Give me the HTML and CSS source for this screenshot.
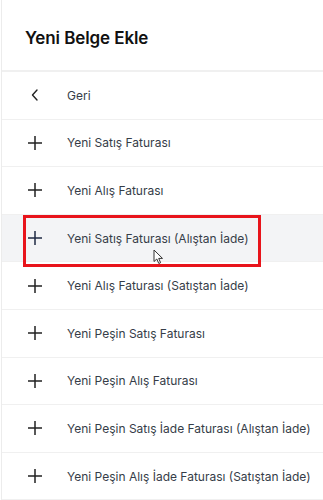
FILE: index.html
```html
<!DOCTYPE html>
<html lang="tr">
<head>
<meta charset="utf-8">
<link rel="stylesheet" href="styles.css">
</head>
<body>
<div class="panel">
  <div class="header">Yeni Belge Ekle</div>
  <ul class="menu">
    <li class="item"><span class="icon"><svg width="16" height="16" viewBox="0 0 16 16"><path d="M10 3 L5.5 8 L10 13" fill="none" stroke="#222" stroke-width="1.4" stroke-linecap="round" stroke-linejoin="round"/></svg></span><span class="label">Geri</span></li>
    <li class="item"><span class="icon"><svg width="16" height="16" viewBox="0 0 16 16"><path d="M8 1 V15 M1 8 H15" stroke="#222" stroke-width="1.5"/></svg></span><span class="label">Yeni Satış Faturası</span></li>
    <li class="item"><span class="icon"><svg width="16" height="16" viewBox="0 0 16 16"><path d="M8 1 V15 M1 8 H15" stroke="#222" stroke-width="1.5"/></svg></span><span class="label">Yeni Alış Faturası</span></li>
    <li class="item active"><span class="icon"><svg width="16" height="16" viewBox="0 0 16 16"><path d="M8 1 V15 M1 8 H15" stroke="#1f2a44" stroke-width="1.5"/></svg></span><span class="label">Yeni Satış Faturası (Alıştan İade)</span>
      <span class="highlight"></span>
      <span class="cursor"><svg width="12" height="16" viewBox="0 0 12 16"><path d="M1 1 L1 12.5 L3.8 10 L5.8 14.5 L7.6 13.7 L5.7 9.4 L9.5 9.4 Z" fill="#fff" stroke="#333" stroke-width="1" stroke-linejoin="round"/></svg></span>
    </li>
    <li class="item"><span class="icon"><svg width="16" height="16" viewBox="0 0 16 16"><path d="M8 1 V15 M1 8 H15" stroke="#222" stroke-width="1.5"/></svg></span><span class="label">Yeni Alış Faturası (Satıştan İade)</span></li>
    <li class="item"><span class="icon"><svg width="16" height="16" viewBox="0 0 16 16"><path d="M8 1 V15 M1 8 H15" stroke="#222" stroke-width="1.5"/></svg></span><span class="label">Yeni Peşin Satış Faturası</span></li>
    <li class="item"><span class="icon"><svg width="16" height="16" viewBox="0 0 16 16"><path d="M8 1 V15 M1 8 H15" stroke="#222" stroke-width="1.5"/></svg></span><span class="label">Yeni Peşin Alış Faturası</span></li>
    <li class="item"><span class="icon"><svg width="16" height="16" viewBox="0 0 16 16"><path d="M8 1 V15 M1 8 H15" stroke="#222" stroke-width="1.5"/></svg></span><span class="label">Yeni Peşin Satış İade Faturası (Alıştan İade)</span></li>
    <li class="item"><span class="icon"><svg width="16" height="16" viewBox="0 0 16 16"><path d="M8 1 V15 M1 8 H15" stroke="#222" stroke-width="1.5"/></svg></span><span class="label">Yeni Peşin Alış İade Faturası (Satıştan İade)</span></li>
  </ul>
</div>
</body>
</html>
```

FILE: styles.css
```css
html, body {
  margin: 0;
  padding: 0;
  background: #fff;
}
body {
  font-family: Inter, "Noto Sans", sans-serif;
  width: 323px;
  height: 500px;
  overflow: hidden;
}
.panel {
  border-left: 1px solid #ececec;
  margin-left: 1px;
  height: 500px;
}
.header {
  height: 72px;
  box-sizing: border-box;
  border-bottom: 2px solid #f0f0f0;
  padding: 28px 0 0 23px;
  font-size: 17px;
  font-weight: 600;
  color: #111;
  line-height: 20px;
  letter-spacing: -0.1px;
}
.menu {
  list-style: none;
  margin: 0;
  padding: 0;
}
.item {
  position: relative;
  height: 47.6px;
  box-sizing: border-box;
  border-bottom: 1px solid #f0f0f0;
  display: flex;
  align-items: center;
  font-size: 12px;
  color: #363d48;
  white-space: nowrap;
}
.icon {
  width: 16px;
  height: 16px;
  margin-left: 25px;
  margin-right: 24px;
  display: flex;
}
.active {
  background: #f3f4f6;
}
.highlight {
  position: absolute;
  left: 21px;
  top: 0;
  width: 238px;
  height: 52px;
  box-sizing: border-box;
  border: 3px solid #e8141b;
}
.cursor {
  position: absolute;
  left: 151px;
  top: 34px;
  display: flex;
}
```
